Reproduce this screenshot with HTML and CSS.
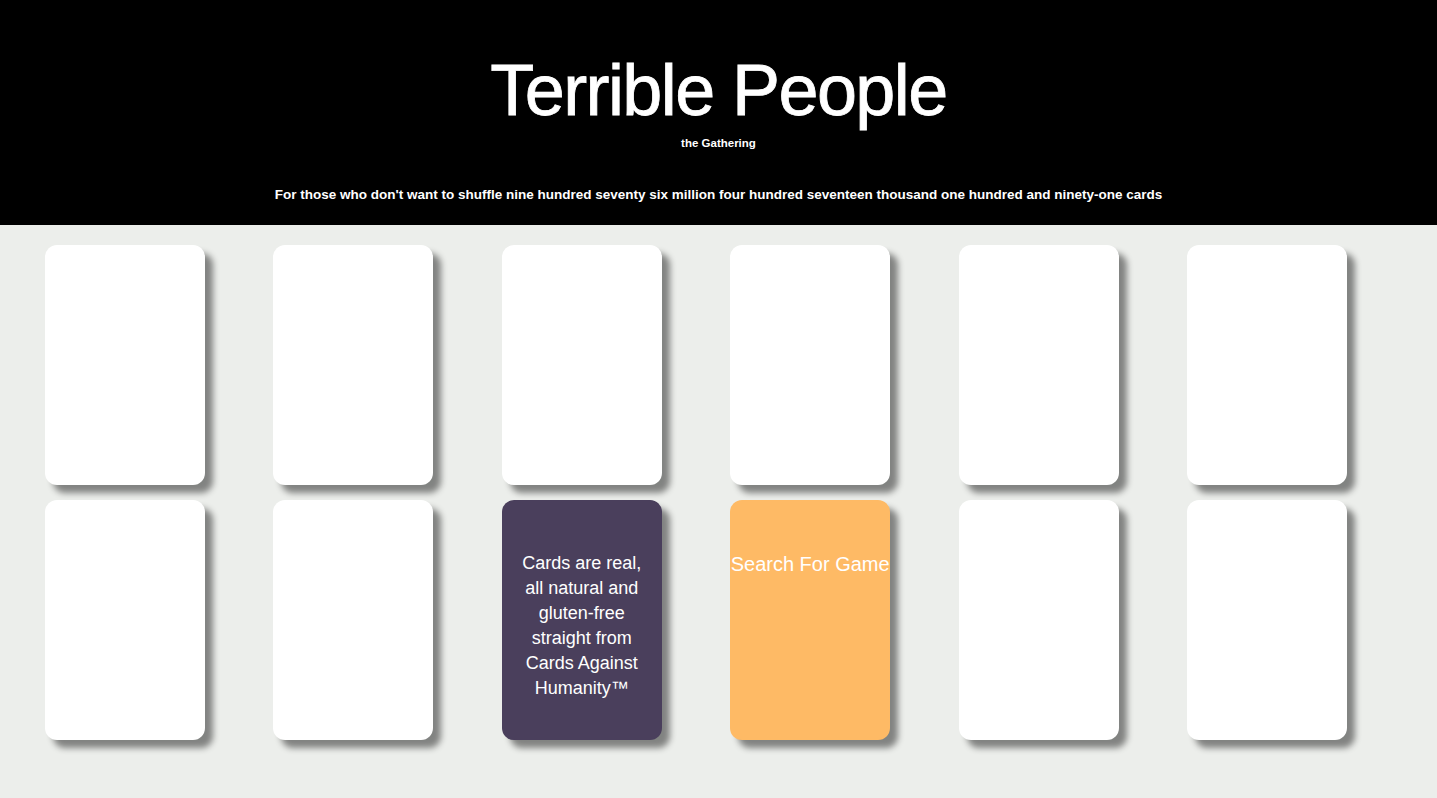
FILE: index.html
```html
<!DOCTYPE html>
<html lang="en">
<head>
    <meta charset="UTF-8">
    <meta name="viewport" content="width=device-width, initial-scale=1.0">
    <title>Terrible People</title>
    <link rel="stylesheet" href="styles.css">
</head>
<body>
    <header>
        <h1>Terrible People</h1>
        <p class="tagline">the Gathering</p>
        <p class="intro">For those who don't want to shuffle nine hundred seventy six million four hundred seventeen thousand one hundred and ninety-one cards</p>
    </header>
    <div class="board">
        <div class="card"></div>
        <div class="card"></div>
        <div class="card"></div>
        <div class="card"></div>
        <div class="card"></div>
        <div class="card"></div>
        <div class="card"></div>
        <div class="card"></div>
        <div class="card card-info">Cards are real, all natural and gluten-free straight from Cards Against Humanity™</div>
        <div class="card card-search">Search For Game</div>
        <div class="card"></div>
        <div class="card"></div>
    </div>
</body>
</html>
```

FILE: styles.css
```css
body {
    font-family: "Liberation Sans", Arial, sans-serif;
    margin: 0;
    padding: 0;
    background-color: #eceeeb;
    min-height: 798px;
}
header {
    background-color: #000;
    color: #fff;
    text-align: center;
    height: 225px;
    padding-top: 50px;
    box-sizing: border-box;
}
h1 {
    margin: 0;
    font-size: 72px;
    font-weight: normal;
    letter-spacing: -1.6px;
    line-height: 80px;
    -webkit-text-stroke: 0.8px #fff;
}
.tagline {
    margin: 6px 0 0;
    font-size: 11.5px;
    font-weight: bold;
    line-height: 14px;
}
.intro {
    margin: 37px 0 0;
    font-size: 13.5px;
    font-weight: bold;
    line-height: 16px;
}
.board {
    display: grid;
    grid-template-columns: repeat(6, 160px);
    justify-content: space-between;
    row-gap: 15px;
    padding: 20px 90px 20px 45px;
}
.card {
    height: 240px;
    background-color: #fff;
    border-radius: 12px;
    box-shadow: 8px 8px 6px rgba(0,0,0,0.45);
    color: #fff;
    text-align: center;
    box-sizing: border-box;
}
.card-info {
    background-color: #4a3f5c;
    font-size: 18px;
    line-height: 25px;
    padding: 11px 18px 0;
    display: flex;
    align-items: center;
}
.card-search {
    background-color: #feba65;
    font-size: 20px;
    line-height: 24px;
    padding-top: 52px;
    white-space: nowrap;
}
```
